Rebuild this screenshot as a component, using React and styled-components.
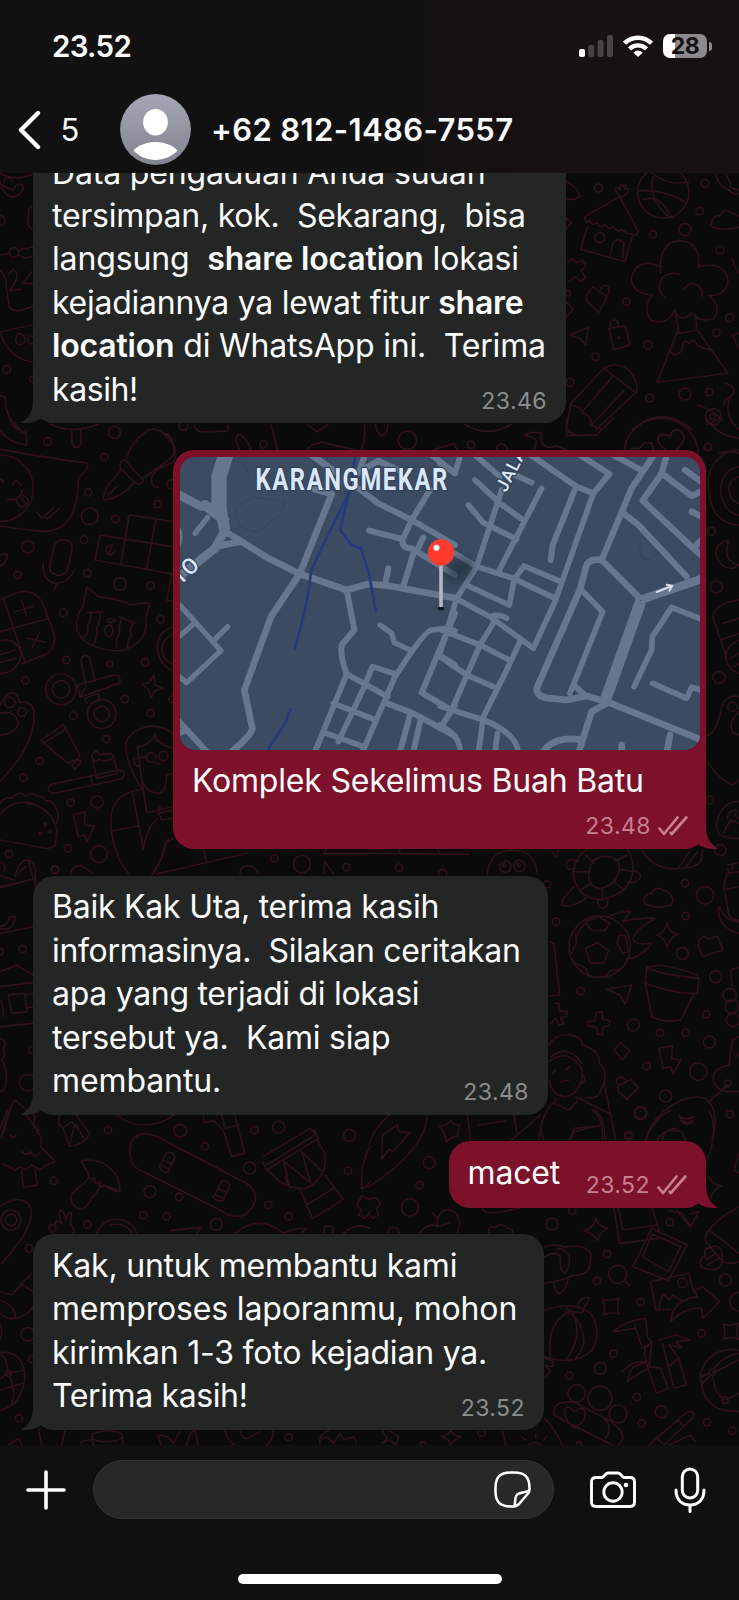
import React from 'react';
import styled, { createGlobalStyle } from 'styled-components';

const GlobalStyle = createGlobalStyle`
  * { box-sizing: border-box; }
  body { margin: 0; background: #0a0a0a; font-family: Inter, "Liberation Sans", sans-serif; color: #fbfbfb; }
`;

const Phone = styled.main`
  width: 739px;
  height: 1600px;
  display: flex;
  flex-direction: column;
  overflow: hidden;
`;

const Header = styled.header`
  flex: none;
  height: 173px;
  background: linear-gradient(90deg, #111111 50%, #171112 78%, #161112);
`;

const StatusBar = styled.div`
  height: 92px;
  padding: 0 27px 0 52px;
  display: flex;
  align-items: center;
  justify-content: space-between;
`;

const Clock = styled.span`
  font-size: 29.5px;
  font-weight: 600;
  letter-spacing: -0.7px;
`;

const StatusIcons = styled.div`
  display: flex;
  align-items: center;
  gap: 10px;
`;

const Battery = styled.div`
  display: flex;
  align-items: center;
  gap: 2px;
`;

const Charge = styled.span`
  width: 44px;
  height: 24px;
  border-radius: 7px;
  background: linear-gradient(90deg, #fff 12px, #8d8a8b 12px);
  color: #151112;
  font-size: 23px;
  font-weight: 700;
  line-height: 24px;
  letter-spacing: -0.6px;
  text-align: center;
`;

const Nub = styled.span`
  width: 3px;
  height: 9px;
  border-radius: 0 4px 4px 0;
  background: #8d8a8b;
`;

const TitleBar = styled.div`
  height: 75px;
  padding-left: 18px;
  display: flex;
  align-items: center;
`;

const Unread = styled.span`
  width: 77.5px;
  padding-left: 18.5px;
  font-size: 31px;
`;

const Contact = styled.h1`
  margin: 0 0 0 20.5px;
  font-size: 31px;
  font-weight: 600;
  letter-spacing: 0.38px;
  white-space: nowrap;
`;

const Chat = styled.section`
  position: relative;
  flex: 1;
  min-height: 0;
  padding: 0 33px 15px;
  display: flex;
  flex-direction: column;
  justify-content: flex-end;
  gap: 26.5px;
  overflow: hidden;
`;

const Wallpaper = styled.svg`
  position: absolute;
  left: 0;
  top: 0;
`;

const Bubble = styled.article`
  position: relative;
  isolation: isolate;
  flex: none;
  width: ${(p) => p.$width}px;
  align-self: ${(p) => (p.$mine ? 'flex-end' : 'flex-start')};
  border-radius: 21px;
  background: ${(p) => (p.$mine ? '#7d112b' : '#242625')};
`;

const Body = styled.div`
  display: flex;
  align-items: flex-end;
  padding: 9.5px 19px ${(p) => (p.$mine ? 13.6 : 12.5)}px 19px;
`;

const Text = styled.div`
  flex: 1;
  min-width: 0;
  font-size: 32px;
  line-height: 43.4px;
`;

const Line = styled.div`
  letter-spacing: ${(p) => p.$track}px;
  white-space: pre;
  b { font-weight: 600; }
`;

const Meta = styled.div`
  flex: none;
  display: flex;
  align-items: center;
  gap: 7px;
  height: 28px;
  margin-bottom: ${(p) => p.$drop}px;
  font-size: 23px;
  letter-spacing: 0.45px;
  color: ${(p) => (p.$mine ? '#c77f91' : '#8b8c8c')};
  svg { flex: none; }
`;

const TailShape = styled.svg`
  position: absolute;
  z-index: -1;
  bottom: 0;
  ${(p) => (p.$mine ? 'right: -12px; transform: scaleX(-1);' : 'left: -12px;')}
`;

const LocationBody = styled.div`
  padding: 7px 6px 9.5px 7px;
  display: flex;
  flex-direction: column;
`;

const Caption = styled.div`
  padding: 9px 12px 0;
  font-size: 32px;
  line-height: 43.4px;
  letter-spacing: -0.2px;
`;

const LocationMeta = styled(Meta)`
  align-self: flex-end;
  margin: 9.5px 12px 0 0;
`;

const MapImage = styled.svg`
  display: block;
  border-radius: 15px;
  background: #3b4b62;
`;

const Footer = styled.footer`
  flex: none;
  height: 155px;
  background: #101010;
  display: flex;
  flex-direction: column;
  align-items: center;
`;

const Composer = styled.div`
  align-self: stretch;
  height: 59px;
  margin-top: 15px;
  padding: 0 33px 0 26px;
  display: flex;
  align-items: center;
`;

const Input = styled.div`
  width: 461px;
  height: 59px;
  margin: 0 36px 0 27px;
  padding-right: 22px;
  border: 1px solid #333;
  border-radius: 30px;
  background: #282828;
  display: flex;
  align-items: center;
  justify-content: flex-end;
`;

const MicSlot = styled.span`
  display: flex;
  margin-left: 38px;
`;

const HomeIndicator = styled.div`
  width: 264px;
  height: 10px;
  margin-top: 55px;
  border-radius: 5px;
  background: #fff;
`;

/* Doodles are drawn at three times their size; each tile has its own origin. */
const doodles = [
  {
    x: 0, y: 0,
    d: `M0 545 Q10 590 40 592 Q75 580 68 555 Q50 545 40 570 Q10 560 0 550 M10 545 Q25 520 38 545 M0 520 Q50 545 99 522
      M96 618 L86 628 L84 675 L99 690 M0 765 L24 762 M57 756 Q70 738 80 748 Q88 740 99 742 M57 765 Q75 780 99 768
      M0 812 Q20 830 18 855 L28 920 Q40 945 99 918 M26 824 Q38 800 50 818 Q55 840 28 872 L62 868 M95 815 L70 850 L97 852
      M0 997 Q50 982 99 975 M0 997 Q30 1080 99 1086 M48 1015 Q55 990 72 1008 Q80 1030 60 1035 Q46 1032 48 1015
      M0 1188 Q22 1185 16 1215 Q20 1250 62 1290`,
    c: [[0, 662, 15], [42, 757, 14], [20, 1108, 12], [100, 1138, 10], [95, 1020, 12]],
  },
  {
    x: 369, y: 0,
    d: `M592 545 Q630 565 632 590 Q610 605 592 595 M648 650 L752 590 L808 695 Q800 715 788 700 M648 650 Q650 675 662 662 Q672 680 684 668 Q695 688 708 674 Q720 692 732 680 Q745 700 758 688 Q775 705 788 700
      M655 680 L635 748 L768 785 L790 708 M724 765 L730 735 Q745 708 765 728 L760 775 M752 590 L738 570 Q740 555 752 570 Q752 545 762 560 Q772 545 768 568 Q785 560 775 580 L757 592
      M808 572 Q900 570 952 610 M850 520 Q900 560 958 545 M852 530 Q835 600 905 655 M820 600 Q870 580 900 640
      M592 655 L608 668 L592 685 M597 788 L610 775 L622 788 L640 780 L652 798 L636 812 L650 832 L635 845 L618 830 L600 845
      M652 885 L672 862 L715 890 L690 937 L655 905 Z M695 868 Q700 850 718 860 Q725 875 712 886 M720 985 L770 978 L782 1035 L735 1050 Z M725 980 Q720 960 738 960 Q750 965 748 980
      M602 1005 L658 982 L650 1035 L632 1015 Z M592 905 L612 930 L592 950
      M875 820 Q868 725 932 722 Q998 728 988 800 Q1065 780 1077 840 Q1075 885 1020 888 Q1060 920 1035 955 Q990 970 970 938 Q940 970 915 935 Q890 980 845 960 Q820 925 850 885 Q785 880 788 830 Q805 770 875 800
      M930 822 Q880 810 870 860 Q870 880 892 895 M945 870 Q960 842 985 855 Q1005 870 998 890
      M918 930 L930 1000 L985 990 L980 945 M925 995 L865 1147 L1077 1120 L985 990 M905 1055 Q920 1075 940 1050 Q940 1010 960 1030 Q975 1010 985 1035 Q1010 1050 1025 1048
      M605 1210 L700 1110 Q735 1080 780 1110 Q810 1150 803 1175 L680 1290 M605 1210 L592 1290 M640 1235 L730 1130 M670 1272 L765 1172 M705 1105 L803 1180 M605 1215 Q640 1220 640 1240 Q665 1245 670 1275
      M790 1290 Q880 1210 970 1290 M1026 675 Q1030 645 1052 648 Q1065 620 1090 640 Q1110 645 1110 650 M1026 675 Q1040 695 1110 682 M1038 520 Q1050 560 1080 570 Q1100 590 1110 580 M1070 520 L1085 550 Q1075 565 1110 570
      M1090 775 Q1095 800 1110 820 M1110 1000 L1090 1005 L1110 1045 M985 1215 Q1030 1230 1060 1260 M1070 1150 Q1110 1165 1085 1190 Q1060 1200 1065 1215 M1085 1190 Q1060 1240 1110 1290`,
    c: [[883, 577, 77], [688, 564, 12], [692, 713, 15], [1008, 550, 12], [992, 633, 11], [948, 689, 18], [852, 703, 11], [1053, 750, 12], [772, 905, 11], [1082, 953, 12], [1042, 998, 11], [837, 1035, 12], [680, 1070, 11], [603, 1147, 12], [842, 1194, 12], [948, 1182, 18], [1021, 1176, 11], [750, 1013, 3], [596, 880, 8], [1033, 1250, 24], [1030, 1250, 8]],
  },
  {
    x: 0, y: 410,
    d: `M22 0 Q30 60 78 68 Q80 90 80 105 Q30 100 0 62 M45 45 Q60 70 75 65 M150 42 Q215 75 295 42 M215 60 L216 100 Q228 125 243 100 L242 60
      M0 118 Q60 130 262 160 Q270 170 235 205 Q235 365 130 364 Q60 358 0 347 M38 225 Q45 200 62 225 M0 208 Q10 208 12 218 M22 268 Q60 275 68 240 M50 270 Q55 300 80 285 Q92 265 68 255 M65 262 L78 285 M110 305 L125 325 L160 295 M135 325 L145 325 L178 296
      M310 265 Q305 270 325 225 L365 178 L402 215 L395 225 Q370 260 312 270 Z M325 255 L350 230 M372 150 Q355 160 362 175 L410 222 Q425 225 430 210 L382 158 Q378 150 372 150 M378 152 Q390 100 440 62 Q465 50 490 70 L525 110 Q530 130 505 150 Q465 180 428 205 M492 70 Q515 70 520 105 M525 120 Q530 140 520 155 L485 172 Q450 190 455 215 Q460 235 475 232
      M300 376 L285 450 L520 492 M300 376 L520 410 M388 315 L520 335 M388 315 L362 465 M467 328 L440 478 M385 322 L375 385 M318 425 Q318 405 335 405 Q330 430 320 430 Q330 440 345 425 M515 490 L500 570 L520 575
      M162 410 Q170 385 195 390 Q222 395 215 425 L202 480 Q190 500 170 495 Q145 490 150 465 Z M130 460 Q125 510 165 520 Q205 520 223 480 M170 520 L163 540
      M0 435 L22 432 Q20 460 0 470 M0 570 Q60 540 85 545 Q115 550 130 585 L163 675 Q170 720 130 735 L65 762 M12 570 L75 755 M0 665 L148 625 M45 605 L100 588 M65 568 L80 620 M80 685 L138 697 M120 665 L95 715 M0 693 Q50 680 65 735 Q50 790 0 790 M0 735 L45 720 M0 758 L48 745
      M260 530 L295 560 Q350 565 392 584 L450 578 L438 625 Q445 700 365 722 Q260 725 230 660 Q228 610 250 590 Z M262 608 L308 606 M355 620 L408 640 M275 610 Q270 640 262 645 Q270 665 252 682 M300 610 Q302 640 290 650 Q295 680 280 702 M365 625 Q355 650 358 670 Q345 690 350 715 M400 640 Q385 660 395 675 Q380 695 383 712 M322 630 Q335 620 345 632 Q330 645 322 630 M315 665 Q315 640 335 648 Q345 665 330 680 Q315 680 315 665
      M243 750 Q245 735 260 737 Q270 740 272 755 L285 815 M243 750 L258 830 M232 825 L340 795 Q362 795 360 815 Q360 820 350 822 L240 862 M255 835 L240 862 L232 825 M262 880 L255 865 L295 850 L300 872
      M425 822 L448 818 L462 795 L465 825 L490 835 L465 842 L455 862 L445 838 Z M520 650 Q470 665 472 715 Q475 760 520 785 M520 670 Q485 690 485 720 Q490 750 520 765
      M0 885 Q20 840 45 850 Q60 865 58 878 Q105 870 102 920 Q100 1010 0 1115 M0 910 Q50 900 54 940 Q50 970 0 975
      M122 992 L190 943 L240 1035 L230 1050 L215 1052 L205 1060 Z M130 1000 L200 955 M215 1065 L235 1048 L243 1055 L225 1077 Z M275 1035 L288 1022 L300 1035 Q340 1025 340 1040 L352 1080 L350 1092 L290 1105 Z M278 1045 Q285 1060 295 1048 Q320 1060 340 1042 M155 1123 L355 1080 Q375 1080 372 1095 Q370 1105 358 1108 L165 1150 Q145 1150 145 1135 Q148 1125 155 1123 M272 1098 L278 1125
      M516 970 Q490 945 440 950 Q370 970 378 1020 Q385 1080 430 1140 M412 1010 Q445 1010 465 975 L470 990 Q500 1010 516 1015 M405 1045 L438 1040 M412 1010 L425 1110 Q440 1150 480 1150 Q500 1140 500 1095 L520 1090 M465 1058 L480 1062 M400 1045 Q400 1065 415 1070 M425 1110 L430 1140 M425 1138 Q335 1150 332 1230 Q335 1330 385 1390 M332 1263 L413 1248 M398 1150 L430 1318 Q440 1250 472 1228 M430 1140 L440 1208 L520 1190 M480 1190 L475 1210 L485 1230 L520 1225 M472 1210 L520 1200 M520 1285 L495 1300 Q480 1370 455 1395
      M0 1180 Q10 1160 35 1165 Q60 1140 75 1158 Q100 1145 110 1160 Q135 1155 135 1172 Q165 1170 175 1215 L170 1240 M0 1215 Q30 1170 90 1178 Q160 1200 172 1265 L165 1305 Q150 1320 120 1312 L0 1290 M80 1180 Q150 1190 165 1245
      M220 1215 L255 1205 L253 1245 L283 1248 L262 1293 L252 1275 L235 1280 Z M0 1355 Q20 1360 12 1385 M0 1395 L40 1410 M45 1400 Q55 1350 85 1350 Q110 1360 105 1390 L108 1440 M60 1385 L75 1370 M210 1395 Q215 1365 245 1368 L280 1390 M0 1433 L100 1408`,
    c: [[0, 235, 100], [143, 95, 12], [343, 67, 18], [313, 141, 11], [265, 247, 11], [473, 282, 11], [269, 319, 25], [346, 327, 11], [252, 389, 11], [84, 411, 18], [53, 495, 11], [262, 489, 11], [360, 522, 19], [452, 527, 11], [190, 608, 11], [482, 628, 11], [199, 750, 11], [329, 762, 9], [435, 757, 11], [76, 811, 11], [183, 838, 46], [183, 838, 26], [305, 912, 43], [305, 912, 23], [374, 867, 11], [220, 917, 11], [452, 909, 11], [318, 987, 11], [29, 877, 16], [66, 906, 13], [119, 1053, 11], [70, 1103, 11], [453, 1042, 14], [490, 1038, 14], [212, 1178, 11], [291, 1176, 18], [204, 1315, 11], [297, 1332, 25], [27, 1332, 11], [165, 1380, 11], [135, 1243, 4], [121, 1270, 4], [148, 1265, 4], [515, 223, 14], [516, 868, 10]],
  },
  {
    x: 0, y: 740,
    d: `M470 402 L740 340 M610 325 L618 362 M500 300 Q490 360 460 395 M970 400 L975 365 L1000 400 M970 340 L1110 340 M980 325 L972 342
      M0 440 L100 418 M85 365 L108 440 M0 565 Q45 575 45 530 L30 530 Q20 560 0 560 M0 580 L100 560 M0 695 L50 675 L99 705 M0 740 L99 728 M25 765 L75 760 L80 815 L35 820 Z M75 765 L99 760 M80 805 L99 800 M0 860 L99 850 M0 780 Q12 790 8 830 M0 895 Q25 905 10 925 Q20 945 5 960 Q20 980 20 1020 Q15 1055 0 1055
      M5 1190 Q20 1110 45 1080 L80 1110 L75 1122 L105 1160 L118 1172 M720 400 Q720 375 750 378 Q770 385 775 402`,
    c: [[906, 372, 26], [823, 355, 11], [1039, 382, 11], [68, 627, 11], [0, 635, 10], [83, 1028, 25], [98, 930, 12], [165, 388, 11]],
  },
  {
    x: 369, y: 740,
    d: `M0 340 L300 343 M92 327 V340 M205 327 L212 342 M355 405 Q360 340 410 332 Q495 320 505 400 M550 335 L560 352 L570 330 M1012 60 Q1050 120 1090 135 L1110 120
      M1048 280 Q1035 240 1060 210 Q1080 180 1110 185 M1048 280 Q1060 295 1110 295 M1062 280 L1085 240 L1110 250 M1075 235 Q1075 210 1105 210 L1098 225 L1110 235 M820 330 Q860 405 970 380 Q1005 370 998 330 M930 382 L965 330 M950 382 L985 335
      M618 385 Q590 395 592 370 Q600 350 628 365 M615 440 Q575 480 578 495 Q600 505 645 480 L655 465 M685 478 L690 500 Q705 510 715 495 L718 475 M775 425 Q800 435 815 412 Q815 395 790 392 M612 400 Q620 345 660 325 M612 400 Q625 480 700 478 Q790 460 792 385 Q790 350 775 328 M660 400 Q665 355 700 350 Q745 345 752 380 Q745 440 690 445 Q655 440 660 400 M615 395 H660 M650 345 L675 370 M635 450 L668 428 M700 478 V445 M765 450 L735 425 M790 395 L752 388 M775 345 L740 362
      M715 532 Q745 515 785 513 L762 545 Q810 530 858 536 Q795 570 792 600 Q800 615 848 610 Q815 655 770 658 M650 545 L690 530 L722 550 L708 572 L665 570 Z M625 585 Q635 560 650 550 M620 580 L622 610 L608 640 M650 625 L685 608 L718 632 L705 668 L663 670 Z M750 585 L770 588 L778 635 L760 640 L745 610 Z M705 712 L725 692 L755 688 M612 665 L650 685 L660 705
      M862 585 Q888 580 894 550 Q900 580 928 583 Q905 590 895 622 Q888 592 862 585 M990 600 L1005 588 L1020 598 L1045 588 L1062 630 L1000 650 L988 615 Z M825 480 Q830 458 848 460 Q860 435 885 452 Q905 455 912 480 Q910 500 895 497 Q870 508 840 496 Q825 495 825 480
      M1075 375 L1110 368 M1075 385 L1080 400 L1110 395 M1090 378 V392 M1075 400 Q1060 430 1068 460 L1080 525 Q1090 540 1110 540 M1065 450 L1110 440 M1110 545 Q1070 545 1052 500 L1048 510 Q1050 565 1110 580
      M830 690 Q845 670 900 680 Q990 700 990 715 L985 760 Q930 765 828 730 L835 680 Q850 700 990 715 M830 732 L848 830 Q890 850 935 840 L975 762 M712 748 L788 735 L768 792 L752 765 Z M542 605 L555 612 L572 765 L540 768
      M560 790 L570 790 V812 L595 815 L590 830 L575 835 L585 852 L570 855 L560 835 L545 852 M682 818 L700 815 V838 L722 842 V858 L702 860 L700 885 L685 882 L682 862 L655 858 V845 L678 842 Z M735 930 L755 908 L782 932 L760 960 Z
      M870 925 L910 918 L908 955 L935 960 L912 1002 L905 980 L882 985 Z M745 1040 L785 1018 L808 1042 L775 1078 L748 1055 Z M755 1035 Q735 1030 745 1015 Q760 1005 772 1022
      M540 915 Q560 880 600 885 Q640 890 640 915 Q695 930 690 970 Q725 1000 695 1050 Q690 1080 650 1072 M540 965 Q600 920 640 990 Q640 1060 590 1070 Q550 1068 540 1020 M545 950 Q600 910 638 970 M552 1000 L560 990 M590 990 L605 980 M575 1025 L600 1020 M640 1005 Q655 1015 640 1030 M560 1075 L555 1090 L600 1110 L625 1085 L622 1070 M555 1088 Q520 1110 510 1200 M630 1075 L720 1120 M670 1110 Q705 1135 700 1200 M705 1030 L740 1200 M610 1180 L615 1165 L690 1158 M610 1180 L600 1200
      M1110 890 L1090 900 L1080 975 Q1030 985 1032 1020 Q1040 1060 1110 1055 M1110 940 L1100 955 M1075 1035 L1020 1085 M830 1200 Q850 1120 940 1080 Q1000 1060 1020 1085 Q1050 1120 1030 1200 M880 1200 Q885 1165 920 1165 M930 1125 Q945 1145 975 1130 M935 1140 Q950 1160 970 1148 M1085 690 L1110 682 M1085 690 L1090 740`,
    c: [[90, 383, 11], [221, 400, 12], [409, 380, 17], [451, 378, 17], [405, 376, 5], [449, 374, 5], [1022, 180, 12], [1054, 330, 17], [534, 433, 11], [948, 430, 11], [1008, 466, 26], [950, 528, 11], [561, 545, 11], [692, 620, 92], [940, 640, 18], [1040, 710, 18], [635, 753, 11], [1012, 823, 11], [793, 855, 18], [873, 878, 11], [950, 878, 11], [1021, 906, 18], [833, 978, 11], [988, 995, 26], [890, 1068, 18], [815, 1118, 18], [1083, 1123, 11], [1082, 765, 20], [1088, 800, 20], [1092, 840, 20], [1076, 1030, 10], [778, 1190, 11]],
  },
  {
    x: 0, y: 1110,
    d: `M0 55 L22 0 M30 0 L10 70 M85 0 L105 18 L100 45 L125 85 L122 110 L165 155 L140 165 L118 180 L95 165 L78 180 L60 170 L45 182 L30 170 L5 160 M65 180 L70 232 L112 225 L105 180 M30 75 Q40 90 48 75 M65 125 Q80 140 92 125 Q100 145 118 130
      M180 15 Q170 45 190 55 L208 108 Q245 110 270 72 L235 25 L228 15 M195 50 L215 35 L232 55 M210 100 L222 50 M250 85 L230 45 M245 155 Q250 145 300 155 Q360 180 360 245 Q340 245 312 225 M245 155 L265 190 Q260 210 285 205 Q280 230 300 215 Q295 240 312 225 L355 240 M265 205 Q250 225 215 250 Q205 285 240 298 Q260 295 275 265 L300 235
      M390 135 Q385 75 435 70 Q470 75 500 95 L720 210 Q775 235 765 275 Q745 325 700 318 Q680 315 660 300 L430 185 Q395 175 390 135 M478 170 L498 130 Q515 120 525 140 L505 185 Q490 195 478 170 M490 150 L515 162 M482 165 L508 178 M640 262 L665 215 Q680 205 690 225 L670 270 Q655 280 640 262 M655 235 L680 248 M645 255 L672 265
      M610 18 L612 38 L640 32 L670 60 L695 140 L735 130 L705 18 M665 15 L675 55 L715 45 M350 15 Q400 55 460 42 Q500 35 520 15 M790 140 L930 55 L955 80 M788 155 L800 180 L955 85 L945 60 M800 165 L945 75 M805 180 Q850 240 920 235 Q985 200 975 130 L950 88 M850 150 L870 235 L855 200 M852 155 L932 218 L905 125 M905 125 L968 185 M900 240 L938 325 L1030 268 L975 195 M920 285 L1000 235
      M1110 110 Q1080 160 1085 235 Q1100 235 1110 215 M1070 285 L1085 258 L1110 270 M1070 285 L1085 300 L1075 315 L1095 325 L1110 305
      M0 290 Q30 265 65 270 Q100 280 92 325 Q80 380 5 460 M160 370 Q140 355 150 345 L165 345 Q165 325 185 340 Q170 305 185 300 Q195 310 198 330 Q205 300 215 310 Q215 330 210 345 Q225 350 220 370 M290 370 Q310 320 370 330 Q400 340 410 370 M330 345 Q380 335 395 370 M512 362 L602 352 L590 370 M705 370 Q780 310 850 370 M850 370 Q900 350 918 355 L905 370 M970 370 L975 348 L1000 350 L998 370 M1030 370 Q1070 335 1110 355
      M0 545 L35 555 L95 490 M60 520 L99 545 M0 570 Q50 590 45 625 Q20 630 0 610 M99 590 Q80 620 45 625 M0 640 Q10 660 0 690 M0 728 Q70 720 75 800 Q65 890 0 900 M25 790 Q20 745 5 735 M25 790 L70 780 M25 790 L0 805 M28 795 Q50 850 35 880 M0 840 L68 820
      M25 1005 L55 985 L65 1005 M115 955 L125 1005 M195 962 L185 1005 M240 1005 Q240 990 275 990 M275 980 Q275 965 320 962 Q370 965 368 980 Q360 995 320 995 Q280 995 275 980 M278 985 V1005 M368 985 V1005 M485 1005 Q470 980 478 975 Q505 975 520 1000 L540 965 M560 1005 Q570 960 585 962 L595 1005 M675 962 Q680 990 705 1005 M720 962 Q725 990 745 985 L780 965 M820 962 Q820 990 800 1005 M960 1005 Q955 970 985 962 M965 985 Q985 975 1000 1000 L1020 970 L1030 990 L1060 980 L1070 1000`,
    c: [[324, 60, 11], [541, 62, 19], [615, 109, 11], [764, 60, 11], [836, 51, 18], [1049, 76, 18], [749, 174, 18], [1044, 182, 11], [162, 212, 11], [450, 245, 18], [538, 261, 11], [805, 285, 11], [430, 315, 11], [500, 319, 11], [649, 343, 18], [866, 319, 11], [262, 343, 11], [33, 330, 30], [33, 330, 17], [158, 355, 10], [87, 415, 11], [83, 673, 20], [57, 925, 11], [26, 790, 9], [95, 748, 10], [866, 982, 11]],
  },
  {
    x: 369, y: 1110,
    d: `M175 15 Q170 120 0 230 M60 15 Q10 60 0 105 M40 75 L85 45 L90 65 L122 68 L72 125 L60 118 L38 148 Z M212 50 Q240 45 245 30 Q252 50 275 45 Q262 60 268 80 Q255 75 230 95 Q232 70 212 50 M295 15 L305 92 M330 45 L410 32 M435 15 L445 75 L515 15 M445 75 L425 92 M520 30 Q510 60 525 92 M605 92 L615 65 L695 45 M680 0 Q710 30 708 92 M830 92 Q850 30 905 0 M1020 0 Q1050 60 1015 150 M865 92 Q880 50 940 65 L950 92 M930 15 Q945 50 975 30
      M1110 130 L1095 180 L1110 190 M1020 200 Q1030 225 1058 228 Q1030 240 1025 265 M0 268 L20 262 L35 282 L22 295 L28 315 L10 325 L0 312 M150 370 Q180 335 205 350 Q200 310 235 298 Q275 305 270 350 L265 370 M205 350 L240 340 M190 308 L205 325 M55 370 Q60 345 85 355 L92 370 M360 370 Q355 345 380 352 Q400 335 415 355 Q435 355 430 370 M340 295 Q350 315 400 305 L450 295
      M735 295 L752 400 L870 385 M748 295 L762 360 L865 345 M850 295 L872 365 M848 355 L955 405 L898 512 L792 470 Z M850 372 L935 410 L898 485 L820 440 Z M845 515 L960 490 L975 550 M845 515 L860 600 L905 598 M870 595 L880 550 L900 570 L912 555 L940 575 M905 635 Q910 570 985 560 L978 540 L1000 530 L1052 575 L1002 625 L998 595 Q950 590 905 635
      M900 302 L940 310 L965 350 L990 305 L962 312 M925 302 L962 350 M1110 290 Q1050 320 1012 370 Q1005 400 1020 405 L1060 455 Q1085 465 1110 455 M1020 360 L1110 430 M995 470 Q990 440 1010 440 Q1000 415 1025 412 Q1055 400 1060 435 Q1065 475 1035 478 Q1010 480 995 470 M1010 450 L1040 430 M1015 465 L1050 445
      M527 410 Q560 400 585 412 Q650 400 665 430 Q670 500 615 495 Q590 510 527 520 M527 440 Q560 420 575 440 Q570 490 590 488 Q605 470 600 440 Q590 415 565 415 M555 520 Q560 550 572 552 Q590 540 600 500 M645 362 Q675 355 680 325 Q690 350 715 355 Q690 370 685 392 Q675 370 645 362 M765 510 L782 528
      M527 600 Q620 570 665 610 Q700 660 670 720 Q620 770 527 740 M600 605 Q530 640 545 745 M610 608 Q645 680 590 750 M590 605 Q640 620 645 700 Q635 730 620 745 M592 590 Q590 605 640 608 Q655 595 600 588 M625 590 Q630 560 660 562 Q660 575 640 600 M527 745 L555 755 L550 770 L527 765 M530 770 L545 785 L530 800
      M700 568 Q720 575 750 565 Q742 590 750 612 Q725 605 702 615 Q712 590 700 568 M1062 642 Q1085 650 1108 640 Q1100 665 1108 688 Q1085 678 1062 688 Q1072 665 1062 642 M733 665 Q760 635 830 625 L835 680 L848 700 L840 770 L875 775 L898 835 L862 850 L835 770 Q825 730 828 715 L850 695 M733 665 L800 655 L820 715 L848 698 M797 640 L800 655 M870 690 L920 675 L962 690 L920 695 L940 715 L900 705 L930 745 L952 825 L915 835 L898 770 L880 700 M898 770 L930 745 M762 785 Q780 755 835 755 L795 770 Q775 795 775 815 L810 790 L840 772
      M1110 720 Q1020 710 995 790 Q995 880 1060 900 L1110 905 M1030 790 Q1050 740 1110 730 M1030 790 L1110 750 M1030 795 Q1040 860 1070 870 M1070 870 L1110 850 M1000 820 L1025 795 M995 800 L1020 790
      M555 915 Q550 880 585 878 Q615 870 640 890 L700 920 Q760 950 762 985 L750 1005 M555 915 Q600 940 690 985 L730 1005 M590 895 Q580 920 615 955 Q655 930 648 905 Q640 885 615 905 Q600 885 590 895 M700 920 Q735 950 710 985 M840 1005 L955 905 Q975 900 975 920 L885 1005 M865 985 L880 1000 M925 930 L945 950 M900 1005 L965 975 L978 995 M527 925 Q560 960 580 1005 M400 962 L410 1005 M480 1005 Q500 990 515 1005 M470 990 L460 982 M500 985 V972 M525 990 L532 980 M218 980 Q240 975 245 960 Q250 978 275 980 Q258 990 245 1005 Q240 985 218 980 M40 962 L55 985 L40 1000 L62 990 L80 1005 L90 980 L60 962`,
    c: [[181, 158, 18], [152, 226, 11], [815, 10, 18], [1083, 13, 11], [778, 75, 11], [123, 292, 26], [549, 342, 18], [610, 302, 11], [902, 336, 11], [714, 432, 11], [684, 513, 11], [746, 493, 27], [1069, 510, 18], [940, 518, 14], [815, 576, 11], [998, 670, 11], [733, 731, 11], [694, 775, 18], [601, 797, 11], [1110, 575, 28], [1030, 787, 10], [1068, 870, 10], [803, 861, 11], [877, 905, 18], [1014, 937, 11], [1090, 962, 11], [818, 940, 11], [623, 850, 26], [693, 865, 36], [747, 912, 27], [338, 968, 11], [162, 1003, 8], [630, 1003, 8]],
  },
  {
    x: 165, y: 418, s: 0.3661,
    d: `M0 45 Q25 55 25 95 M80 20 Q85 38 100 38 L168 36 Q175 32 172 20 M290 20 L310 98 M210 98 Q182 50 205 45 Q228 60 238 98 M75 90 L140 98 M390 18 L415 38 L445 18 M575 18 Q580 48 595 48 Q610 40 608 18 M380 96 Q395 70 430 66 L535 92 Q548 60 545 18 M735 86 L790 70 L802 96 M905 98 Q905 70 920 70 Q938 75 936 98 M820 18 Q880 55 945 18 M1097 0 L1097 48 L1180 46 L1225 0 M1097 35 L1120 46 M1160 0 L1165 20 L1190 30 M982 48 Q1000 35 1030 42 Q1020 55 1035 75 Q1050 85 1070 76 L1105 90 M982 48 Q1010 50 1015 65 L1005 96
      M1380 50 Q1385 32 1400 32 Q1420 40 1417 58 Q1408 85 1382 95 Q1345 75 1345 55 Q1355 38 1380 50 M1267 96 Q1270 80 1295 84 Q1310 60 1330 70 L1337 96 M1478 0 Q1510 50 1568 55 M1480 18 L1520 0 M1515 96 Q1540 88 1568 96`,
    c: [[50, 22, 12], [269, 72, 10], [662, 61, 25], [836, 73, 10], [1355, 102, 102], [1483, 79, 10]],
  },
  {
    x: 440, y: 440,
    d: `M897 30 Q830 30 805 110 Q800 250 897 255 M897 80 Q840 90 842 160 Q855 220 897 225 M897 110 Q860 120 868 160 Q875 185 897 190 M865 300 Q825 310 828 345 Q840 385 880 385 L897 375 Q860 365 860 335 Z M897 480 Q825 490 818 530 L855 640 Q860 690 897 700 M848 550 L897 535 M842 600 L897 580 M897 600 Q850 620 860 660 M870 655 L897 640 M880 680 L897 670 M897 770 Q860 760 845 800 Q830 880 800 888 M897 815 Q860 850 880 880 L897 885`,
    c: [[814, 274, 12], [829, 441, 18], [837, 712, 18], [877, 801, 14]],
  },
];

const roadsWest = [
  [46, 'M185 35 L162 110 L162 210'],
  [34, 'M165 190 L178 265'],
  [26, 'M30 158 L105 198 L160 205'],
  [30, 'M120 195 L178 240'],
  [26, 'M180 270 L150 325 L30 420'],
  [20, 'M180 275 L230 305 L310 355 L405 402 L545 450 L610 432 L670 437 L870 474 M225 305 L160 318'],
  [20, 'M440 45 L510 95 M450 148 L500 162 L405 400 L318 530 L238 750 L262 865 Q260 885 200 935'],
  [16, 'M128 232 L90 280 M30 480 L85 540 L168 632 L65 728 L30 700 M30 600 L90 548 M188 560 L148 600'],
  [18, 'M30 832 L130 940 M30 885 L58 872'],
  [18, 'M545 450 L568 570 L530 615 Q525 650 545 702'],
  [16, 'M645 555 L680 580 L688 608 L740 632'],
  [17, 'M870 572 L845 566 L800 570 Q785 572 740 635 L690 710 L595 930 M595 920 L478 878 M545 702 L450 935 M545 702 L668 770 M692 702 L622 680 L598 740 L520 905 M505 790 L632 840'],
  [18, 'M660 788 L745 820 L870 888 M735 825 L705 935 M768 835 L745 935 M870 520 L770 758 L855 808 M822 645 L870 675 M870 795 L832 855'],
  [18, 'M560 130 L640 190 L740 240 L870 315 M600 45 L580 100 M795 150 L740 240 L712 300 Q712 325 740 325 L870 405 M612 272 L712 297 M775 292 L758 328 M748 330 L715 440 M670 385 L660 435 M600 85 L640 62 L700 90 M800 45 L870 100'],
];

const roadsEast = [
  [17, 'M60 50 L45 98 L0 72 M105 45 L180 110 M105 120 L180 190 L242 235 M85 195 L130 248 L230 298 M185 150 L110 380 L50 475 L0 640 M305 145 L178 390 M225 105 L275 128'],
  [17, 'M45 340 L110 380 L220 415 L345 475 M78 435 L208 495 L222 420 L252 378 L362 425 M0 468 L50 475 M60 482 L150 530 L280 625 L345 485 L460 160 M150 530 Q180 520 200 535'],
  [18, 'M265 40 L410 140 L460 160 L508 102 L420 45 M408 140 L338 315 L332 360 M520 45 L600 88'],
  [19, 'M645 40 L575 145 L485 360 M680 45 L665 100 L608 182 L765 330 L790 350 M665 100 L755 168 L790 150 M735 90 L790 130 M755 215 L790 232 M790 295 L760 325 M550 220 L595 255 L740 410'],
  [20, 'M600 475 L485 360 Q440 352 435 392 L420 448 L290 745 Q290 775 335 775 L380 780 L440 768 L500 785 L790 902'],
  [17, 'M422 448 L488 515 L390 760 M400 735 L435 765'],
  [34, 'M600 490 L500 770'],
  [26, 'M600 480 L790 415'],
  [17, 'M790 540 L695 502 L637 590 L635 630 L582 740 M638 730 L740 775 L755 742 L790 752'],
  [20, 'M500 790 L455 815 L415 940 M310 935 Q340 890 415 898 M545 915 V940 M690 885 L680 940'],
  [17, 'M0 568 L120 615 L208 660 M240 605 L205 680 L130 830 L115 940 M160 550 L120 615 L35 810 L0 865 M0 650 L80 705 L160 740 M0 798 L130 840 Q232 880 235 940 M0 855 Q65 890 60 940 M172 880 L165 940'],
];

const rivers = [
  'M572 40 L552 160 Q460 340 438 395 L430 460 L415 530 L390 625',
  'M550 165 L525 270 L560 315 L588 325 L612 400 L632 512',
  'M376 808 L360 850 L305 935',
];

function ChatWallpaper() {
  return (
    <Wallpaper width="739" height="1273" viewBox="0 173 739 1273" fill="none" stroke="#2d1219" strokeLinecap="round" strokeLinejoin="round">
      {doodles.map((tile, i) => (
        <g key={i} strokeWidth="4.8" transform={`translate(${tile.x} ${tile.y}) scale(${tile.s || 0.33333})`}>
          <path d={tile.d} />
          {tile.c.map(([cx, cy, r], n) => <circle key={n} cx={cx} cy={cy} r={r} />)}
        </g>
      ))}
    </Wallpaper>
  );
}

function LocationMap() {
  return (
    <MapImage width="520" height="293" viewBox="0 0 520 293">
      <defs>
        <filter id="soft" x="-50%" y="-50%" width="200%" height="200%"><feGaussianBlur stdDeviation="4" /></filter>
      </defs>
      <g fill="none" strokeLinecap="round" strokeLinejoin="round">
        <g transform="translate(-15 -17) scale(.33333)">
          <path d="M210 210 L260 170 L360 185 L345 225 L275 278 L225 260 Z M180 60 Q250 60 250 110" stroke="#37465c" strokeWidth="4" />
          <path d="M40 250 Q65 290 40 330" fill="#67768f" />
          {roadsWest.map(([w, d], i) => <path key={i} d={d} stroke="#67768f" strokeWidth={w} />)}
          <path d="M186 290 L198 294 L190 300 Z" fill="#35435a" />
          {rivers.map((d) => <path key={d} d={d} stroke="#26397f" strokeWidth="8" />)}
        </g>
        <g transform="translate(260 -17) scale(.33333)">
          {roadsEast.map(([w, d], i) => <path key={i} d={d} stroke="#67768f" strokeWidth={w} />)}
          <path d="M600 310 Q595 360 625 360 L655 335" stroke="#37465c" strokeWidth="4" />
          <path d="M650 456 L695 438 M680 434 L697 437 L688 452" stroke="#d3dbe7" strokeWidth="6" />
          <circle cx="602" cy="481" r="2" fill="#2d3a50" />
          <circle cx="401" cy="759" r="3" fill="#2d3a50" />
        </g>
      </g>
      <g fontFamily='Roboto, "Liberation Sans", sans-serif' fill="#dbe7fb" stroke="#33425a" strokeWidth="2.4" paintOrder="stroke">
        <text transform="translate(75.5 33) scale(.78 1)" fontSize="30.5" fontWeight="700" textLength="246">KARANGMEKAR</text>
        <text transform="translate(326 36) rotate(-63)" fontSize="18" fontWeight="500" textLength="46">JALA</text>
        <text transform="translate(0 129) rotate(-43)" fontSize="22" fontWeight="500">TO</text>
      </g>
      <ellipse cx="279" cy="113" rx="15" ry="10" fill="#1d2a35" opacity=".55" transform="rotate(-35 279 113)" filter="url(#soft)" />
      <ellipse cx="261" cy="151.500" rx="3.500" ry="1.800" fill="#0f1622" />
      <path d="M261 105 V150" stroke="#b4b8bf" strokeWidth="3.600" />
      <circle cx="261" cy="95.500" r="13.200" fill="#ff3b30" />
      <circle cx="256.500" cy="90.700" r="3" fill="#fff" />
    </MapImage>
  );
}

function Tail({ mine }) {
  return (
    <TailShape $mine={mine} width="40" height="28" viewBox="0 0 40 28">
      <path d="M12 0 V6 C12 16 8 23 0 28 C8 28.500 15 27 20.500 23 C25 26.500 29 28 36 28 L40 0 Z" fill={mine ? '#7d112b' : '#242625'} />
    </TailShape>
  );
}

function Ticks() {
  return (
    <svg width="30" height="20" viewBox="0 0 30 20" fill="none" stroke="currentColor" strokeWidth="2.700" strokeLinecap="round" strokeLinejoin="round">
      <path d="M1.500 12.500 L6 18 L19.500 1.500" />
      <path d="M12.700 16.800 L13.800 18 L28.300 1.500" />
    </svg>
  );
}

function Message({ width, mine, time, lines, drop = -4 }) {
  return (
    <Bubble $width={width} $mine={mine}>
      <Tail mine={mine} />
      <Body $mine={mine}>
        <Text>{lines.map(([track, content], i) => <Line key={i} $track={track}>{content}</Line>)}</Text>
        <Meta $mine={mine} $drop={drop}><span>{time}</span>{mine && <Ticks />}</Meta>
      </Body>
    </Bubble>
  );
}

export default function App() {
  return (
    <Phone>
      <GlobalStyle />
      <Header>
        <StatusBar>
          <Clock>23.52</Clock>
          <StatusIcons>
            <svg width="34" height="22" viewBox="0 0 34 22">
              <rect x="0" y="14" width="6" height="8" rx="1.800" fill="#fff" />
              <rect x="9.300" y="10" width="6" height="12" rx="1.800" fill="#474344" />
              <rect x="18.600" y="5" width="6" height="17" rx="1.800" fill="#474344" />
              <rect x="28" y="0" width="6" height="22" rx="1.800" fill="#474344" />
            </svg>
            <svg width="30" height="22" viewBox="0 0 30 22" fill="none" stroke="#fff" strokeWidth="4.400">
              <path d="M1.500 8.200 A19.500 19.500 0 0 1 28.500 8.200" />
              <path d="M6.500 13.800 A12.200 12.200 0 0 1 23.500 13.800" />
              <path d="M10.300 17.700 Q15 13.500 19.700 17.700 L15 22 Z" fill="#fff" stroke="none" />
            </svg>
            <Battery><Charge>28</Charge><Nub /></Battery>
          </StatusIcons>
        </StatusBar>
        <TitleBar>
          <svg width="24" height="40" viewBox="0 0 24 40" fill="none" stroke="#fff" strokeWidth="4.400" strokeLinecap="round" strokeLinejoin="round">
            <path d="M20 3 L3 20 L20 37" />
          </svg>
          <Unread>5</Unread>
          <svg width="71" height="71" viewBox="0 0 71 71">
            <defs>
              <linearGradient id="avatar" x1="0" y1="0" x2="0" y2="1">
                <stop offset="0" stopColor="#a4a6b6" />
                <stop offset="1" stopColor="#82858f" />
              </linearGradient>
            </defs>
            <circle cx="35.500" cy="35.500" r="35.400" fill="url(#avatar)" />
            <ellipse cx="35.500" cy="28.200" rx="12.400" ry="13.200" fill="#fff" />
            <path d="M13.500 56.500 C24 45 47 45 57.500 56.500 C46 69 25 69 13.500 56.500 Z" fill="#fff" />
          </svg>
          <Contact>+62 812-1486-7557</Contact>
        </TitleBar>
      </Header>

      <Chat>
        <ChatWallpaper />
        <Message width={533} time="23.46" lines={[
          [-0.17, 'Data pengaduan Anda sudah'],
          [-0.26, 'tersimpan, kok.  Sekarang,  bisa'],
          [-0.14, <>langsung  <b>share location</b> lokasi</>],
          [-0.25, <>kejadiannya ya lewat fitur <b>share</b></>],
          [-0.18, <><b>location</b> di WhatsApp ini.  Terima</>],
          [-0.4, 'kasih!'],
        ]} />
        <Bubble $width={533} $mine>
          <Tail mine />
          <LocationBody>
            <LocationMap />
            <Caption>Komplek Sekelimus Buah Batu</Caption>
            <LocationMeta $mine><span>23.48</span><Ticks /></LocationMeta>
          </LocationBody>
        </Bubble>
        <Message width={515} time="23.48" lines={[
          [-0.23, 'Baik Kak Uta, terima kasih'],
          [-0.33, 'informasinya.  Silakan ceritakan'],
          [-0.3, 'apa yang terjadi di lokasi'],
          [-0.24, 'tersebut ya.  Kami siap'],
          [-0.1, 'membantu.'],
        ]} />
        <Message width={257.5} mine time="23.52" drop={-4.5} lines={[[-0.15, 'macet']]} />
        <Message width={511} time="23.52" lines={[
          [-0.21, 'Kak, untuk membantu kami'],
          [-0.16, 'memproses laporanmu, mohon'],
          [-0.2, 'kirimkan 1-3 foto kejadian ya.'],
          [-0.38, 'Terima kasih!'],
        ]} />
      </Chat>

      <Footer>
        <Composer>
          <svg width="40" height="40" viewBox="0 0 40 40" stroke="#fff" strokeWidth="3.600" strokeLinecap="round">
            <path d="M20 2 V38 M2 20 H38" />
          </svg>
          <Input>
            <svg width="37" height="37" viewBox="0 0 37 37" fill="none" stroke="#fff" strokeWidth="2.500" strokeLinecap="round" strokeLinejoin="round">
              <path d="M20 35.500 H17 C6 35.500 1.500 31 1.500 20 V17 C1.500 6 6 1.500 17 1.500 H20 C31 1.500 35.500 6 35.500 17 V19 C35.500 20.500 35 21.500 34 22.500 L25 33 C23.500 34.500 22 35.500 20 35.500" />
              <path d="M20.500 35 C21.500 31 20.500 27 22.500 24.500 C25 20.500 31 22.500 35 19.500" />
            </svg>
          </Input>
          <svg width="46" height="38" viewBox="0 0 46 38" fill="none" stroke="#fff" strokeWidth="2.900" strokeLinejoin="round">
            <path d="M1.500 11 C1.500 8 3 6.500 6 6.500 H12 C14 6.500 15 2 18 2 H28 C31 2 32 6.500 34 6.500 H40 C43 6.500 44.500 8 44.500 11 V31 C44.500 34 43 35.500 40 35.500 H6 C3 35.500 1.500 34 1.500 31 Z" />
            <circle cx="23" cy="21" r="9.200" />
            <circle cx="36" cy="14" r="2.300" fill="#fff" stroke="none" />
          </svg>
          <MicSlot>
            <svg width="32" height="46" viewBox="0 0 32 46" fill="none" stroke="#fff" strokeWidth="3" strokeLinecap="round">
              <rect x="8.300" y="2" width="15.400" height="29" rx="7.700" />
              <path d="M2 23 C2 33 8 38 16 38 C24 38 30 33 30 23 M16 38 V44.500" />
            </svg>
          </MicSlot>
        </Composer>
        <HomeIndicator />
      </Footer>
    </Phone>
  );
}
